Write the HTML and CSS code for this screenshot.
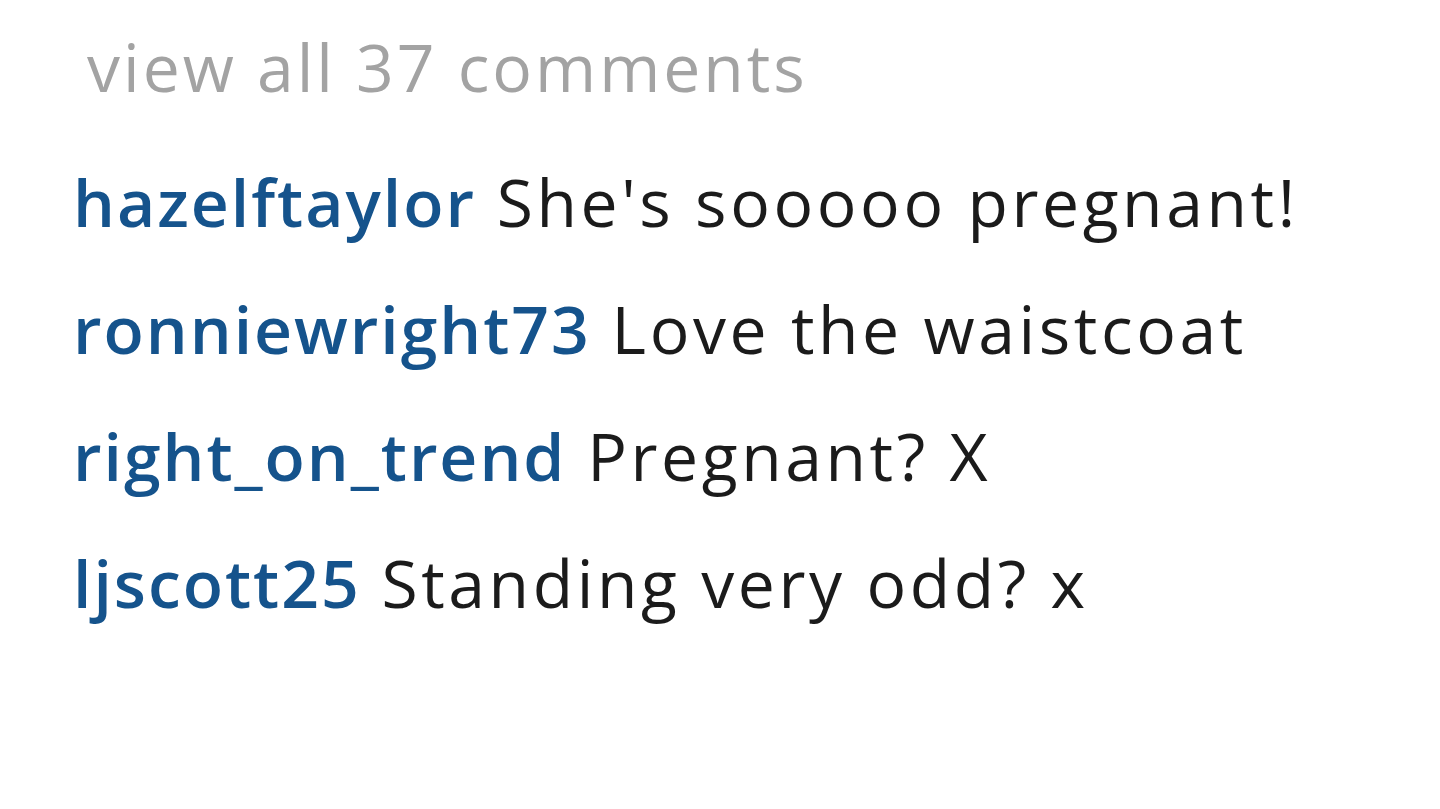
FILE: index.html
```html
<!DOCTYPE html>
<html lang="en">
<head>
  <meta charset="UTF-8" />
  <meta name="viewport" content="width=device-width, initial-scale=1.0">
  <title>Comments</title>
  <link rel="stylesheet" href="styles.css">
</head>
<body>

  <div class="comments">
    <div class="view-all">view all 37 comments</div>

    <ul class="comment-list">
      <li class="comment"><span class="user">hazelftaylor</span> She's sooooo pregnant!</li>
      <li class="comment"><span class="user">ronniewright73</span> Love the waistcoat</li>
      <li class="comment"><span class="user">right_on_trend</span> Pregnant? X</li>
      <li class="comment"><span class="user">ljscott25</span> Standing very odd? x</li>
    </ul>
  </div>

</body>
</html>
```

FILE: styles.css
```css
body {
  margin: 0;
  background: #fff;
  font-family: 'Open Sans', 'Liberation Sans', sans-serif;
}

.comments {
  padding: 21px 0 0 73px;
}

.view-all {
  color: #a3a3a3;
  font-size: 66px;
  line-height: 90px;
  letter-spacing: 3px;
  padding-left: 14px;
  margin-bottom: 27px;
}

.comment-list {
  list-style: none;
  margin: 0;
  padding: 0;
}

.comment {
  color: #1b1b1b;
  font-size: 66px;
  line-height: 127px;
  font-weight: 500;
  letter-spacing: 3.6px;
}

.user {
  color: #15538c;
  font-weight: 600;
  letter-spacing: 2px;
}
```
